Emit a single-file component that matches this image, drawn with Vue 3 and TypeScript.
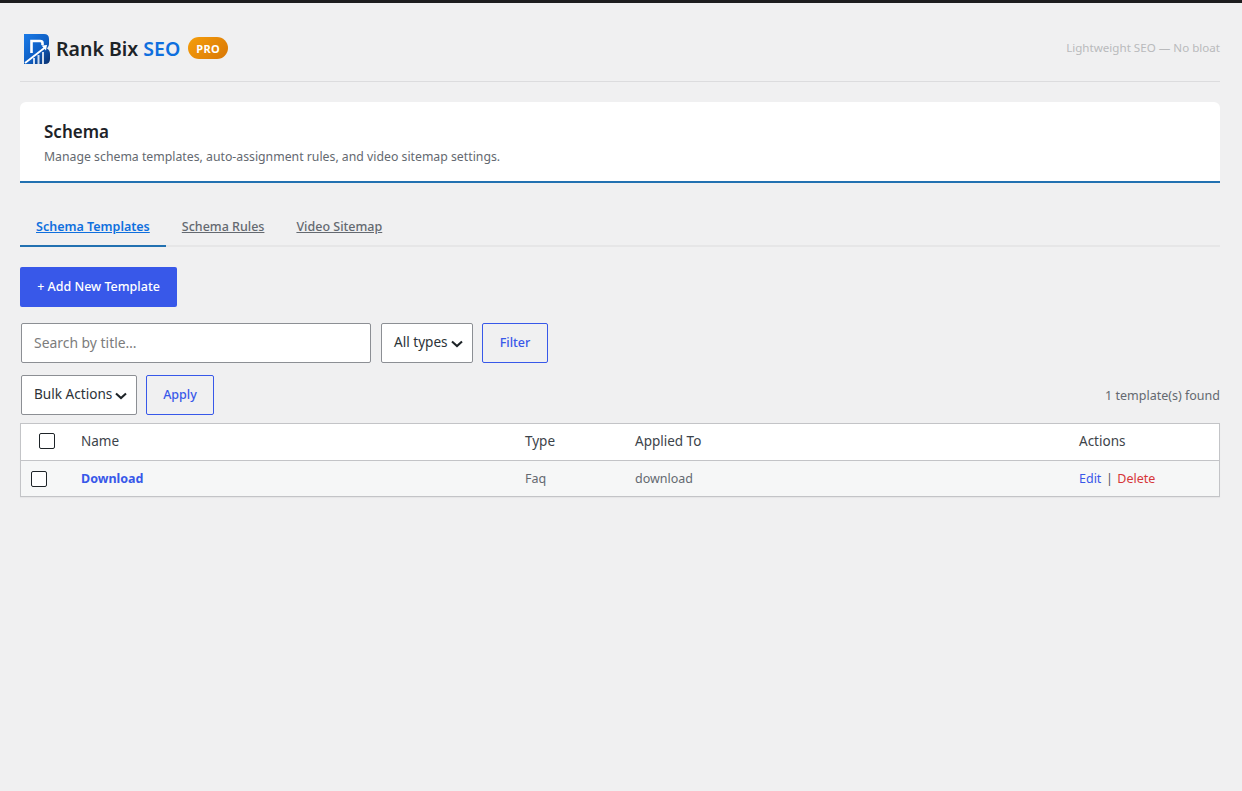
<script setup lang="ts">
import { ref } from 'vue'

interface Template {
  name: string
  type: string
  appliedTo: string
}

const tabs = ['Schema Templates', 'Schema Rules', 'Video Sitemap']
const activeTab = ref('Schema Templates')

const templates = ref<Template[]>([
  { name: 'Download', type: 'Faq', appliedTo: 'download' },
])
</script>

<template>
  <div class="page">
    <header class="brand-bar">
      <div class="brand">
        <svg class="logo" viewBox="0 0 26 30" width="26" height="30">
          <defs>
            <linearGradient id="logoFill" x1="0" y1="0" x2="1" y2="1">
              <stop offset="0" stop-color="#1a7be8" />
              <stop offset="0.55" stop-color="#0f5fc4" />
              <stop offset="1" stop-color="#0a2f6b" />
            </linearGradient>
          </defs>
          <path d="M0 0H20Q25 0 25 5V10Q25 12.5 23 14.5Q26 16 26 20V25Q26 30 21 30H0Z" fill="url(#logoFill)" />
          <path d="M7.5 19V7H16Q18.5 7 18.5 9V11" fill="none" stroke="#fff" stroke-width="2.6" />
          <path d="M1 29L21 13.5" stroke="#fff" stroke-width="1.9" />
          <path d="M17.5 11.5L23 11L22 16.5Z" fill="#fff" />
          <path d="M9 30V24H11V30ZM13.5 30V21H15.5V30ZM18 30V18H20V30Z" fill="#fff" opacity="0.8" />
        </svg>
        <span class="brand-name">Rank Bix <em>SEO</em></span>
        <span class="pro">PRO</span>
      </div>
      <span class="tagline">Lightweight SEO — No bloat</span>
    </header>

    <section class="intro">
      <h1>Schema</h1>
      <p>Manage schema templates, auto-assignment rules, and video sitemap settings.</p>
    </section>

    <nav class="tabs">
      <a
        v-for="tab in tabs"
        :key="tab"
        href="#"
        class="tab"
        :class="{ active: tab === activeTab }"
        @click.prevent="activeTab = tab"
      >{{ tab }}</a>
    </nav>

    <button class="primary" type="button">+ Add New Template</button>

    <div class="filters">
      <input class="search" type="text" placeholder="Search by title…" />
      <div class="select">
        <span>All types</span>
        <svg viewBox="0 0 12 8" width="12" height="8"><path d="M1 1.5L6 6L11 1.5" fill="none" stroke="#1d2327" stroke-width="2.1" /></svg>
      </div>
      <button class="outline filter-btn" type="button">Filter</button>
    </div>

    <div class="bulk-row">
      <div class="select">
        <span>Bulk Actions</span>
        <svg viewBox="0 0 12 8" width="12" height="8"><path d="M1 1.5L6 6L11 1.5" fill="none" stroke="#1d2327" stroke-width="2.1" /></svg>
      </div>
      <button class="outline apply-btn" type="button">Apply</button>
      <span class="count">1 template(s) found</span>
    </div>

    <div class="table">
      <div class="row head">
        <div class="check-cell head-check"><span class="box"></span></div>
        <div>Name</div>
        <div>Type</div>
        <div>Applied To</div>
        <div>Actions</div>
      </div>
      <div v-for="item in templates" :key="item.name" class="row body">
        <div class="check-cell"><span class="box"></span></div>
        <div><a href="#" class="title-link">{{ item.name }}</a></div>
        <div>{{ item.type }}</div>
        <div>{{ item.appliedTo }}</div>
        <div class="actions">
          <a href="#" class="edit">Edit</a>
          <span class="sep">|</span>
          <a href="#" class="delete">Delete</a>
        </div>
      </div>
    </div>
  </div>
</template>

<style scoped>
.page {
  min-height: 791px;
  box-sizing: border-box;
  border-top: 3px solid #1d1d1f;
  padding: 0 22px 0 20px;
  background: #f0f0f1;
  font-family: "Noto Sans", "Open Sans", sans-serif;
  font-size: 13px;
  color: #3c434a;
}

.brand-bar {
  height: 79px;
  box-sizing: border-box;
  display: flex;
  align-items: center;
  justify-content: space-between;
  border-bottom: 1px solid #dcdcde;
  padding: 12px 0 0 4px;
}

.brand {
  display: flex;
  align-items: center;
}

.logo {
  margin-top: 1px;
}

.brand-name {
  margin-left: 6px;
  font-size: 19.5px;
  font-weight: 600;
  color: #1d2327;
}

.brand-name em {
  font-style: normal;
  color: #0f6fde;
}

.pro {
  margin-left: 8px;
  height: 22px;
  width: 40px;
  border-radius: 11px;
  background: linear-gradient(135deg, #f59e0b, #d97706);
  color: #fff;
  font-size: 11px;
  font-weight: 700;
  letter-spacing: 0.4px;
  display: flex;
  align-items: center;
  justify-content: center;
}

.tagline {
  margin-bottom: 2px;
  font-size: 11.6px;
  color: #b9babc;
}

.intro {
  margin-top: 20px;
  height: 81px;
  box-sizing: border-box;
  background: #fff;
  border-radius: 6px 6px 0 0;
  border-bottom: 2px solid #2271b1;
  padding: 18px 24px 0;
}

.intro h1 {
  margin: 0;
  font-size: 17px;
  line-height: 23px;
  font-weight: 600;
  color: #1d2327;
}

.intro p {
  margin: 5px 0 0;
  font-size: 12.27px;
  line-height: 18px;
  color: #646970;
}

.tabs {
  margin-top: 24px;
  height: 40px;
  box-sizing: border-box;
  display: flex;
  border-bottom: 2px solid #e6e6e7;
}

.tab {
  height: 40px;
  box-sizing: border-box;
  padding: 0 16px;
  line-height: 39px;
  font-size: 12.5px;
  font-weight: 500;
  color: #646970;
}

.tab.active {
  color: #0f6fde;
  font-weight: 600;
  border-bottom: 2px solid #2271b1;
}

.primary {
  display: block;
  margin-top: 20px;
  width: 157px;
  height: 40px;
  border: 0;
  border-radius: 2px;
  padding: 0 0 2px;
  background: #3858e9;
  color: #fff;
  font: 500 12.5px "Noto Sans", sans-serif;
}

.filters,
.bulk-row {
  display: flex;
  align-items: center;
  padding-left: 1px;
}

.filters {
  margin-top: 16px;
}

.bulk-row {
  margin-top: 12px;
}

.search {
  width: 350px;
  height: 40px;
  box-sizing: border-box;
  border: 1px solid #8c8f94;
  border-radius: 2px;
  padding: 0 12px 2px;
  background: #fff;
  font: 13.9px "Noto Sans", sans-serif;
  color: #1d2327;
  outline: none;
}

.search::placeholder {
  color: #7c7c7c;
}

.select {
  height: 40px;
  box-sizing: border-box;
  border: 1px solid #8c8f94;
  border-radius: 2px;
  padding: 0 0 3px 12px;
  background: #fff;
  display: flex;
  align-items: center;
  gap: 3px;
  font-size: 13.6px;
  color: #2c3338;
  white-space: nowrap;
}

.select svg {
  margin-top: 4px;
}

.filters .select {
  margin-left: 10px;
  width: 92px;
}

.bulk-row .select {
  width: 116px;
}

.outline {
  height: 40px;
  box-sizing: border-box;
  border: 1px solid #3858e9;
  border-radius: 2px;
  background: transparent;
  color: #3858e9;
  font: 500 12.5px "Noto Sans", sans-serif;
  padding: 0 0 2px;
}

.filter-btn {
  width: 66px;
  margin-left: 9px;
}

.apply-btn {
  width: 68px;
  margin-left: 9px;
}

.count {
  margin-left: auto;
  font-size: 12.5px;
  color: #646970;
}

.table {
  margin-top: 8px;
  border: 1px solid #c3c4c7;
  box-shadow: 0 1px 1px rgba(0, 0, 0, 0.04);
}

.row {
  display: grid;
  grid-template-columns: 60px 444px 110px 444px 1fr;
  align-items: center;
}

.head {
  height: 37px;
  box-sizing: border-box;
  background: #fff;
  border-bottom: 1px solid #c3c4c7;
  padding-bottom: 3px;
  font-size: 13.5px;
  color: #3c434a;
}

.body {
  height: 35px;
  box-sizing: border-box;
  background: #f6f7f7;
  font-size: 12.5px;
  color: #646970;
}

.check-cell {
  display: flex;
  padding-left: 10px;
}

.head-check {
  padding-left: 18px;
}

.box {
  width: 16px;
  height: 16px;
  box-sizing: border-box;
  border: 1px solid #1d2327;
  border-radius: 2px;
  background: #fff;
}

.title-link {
  color: #3858e9;
  font-weight: 700;
  text-decoration: none;
}

.actions {
  display: flex;
  align-items: center;
  gap: 4.5px;
}

.actions a {
  text-decoration: none;
}

.edit {
  color: #3858e9;
}

.delete {
  color: #d63638;
}

.sep {
  color: #50575e;
}
</style>
